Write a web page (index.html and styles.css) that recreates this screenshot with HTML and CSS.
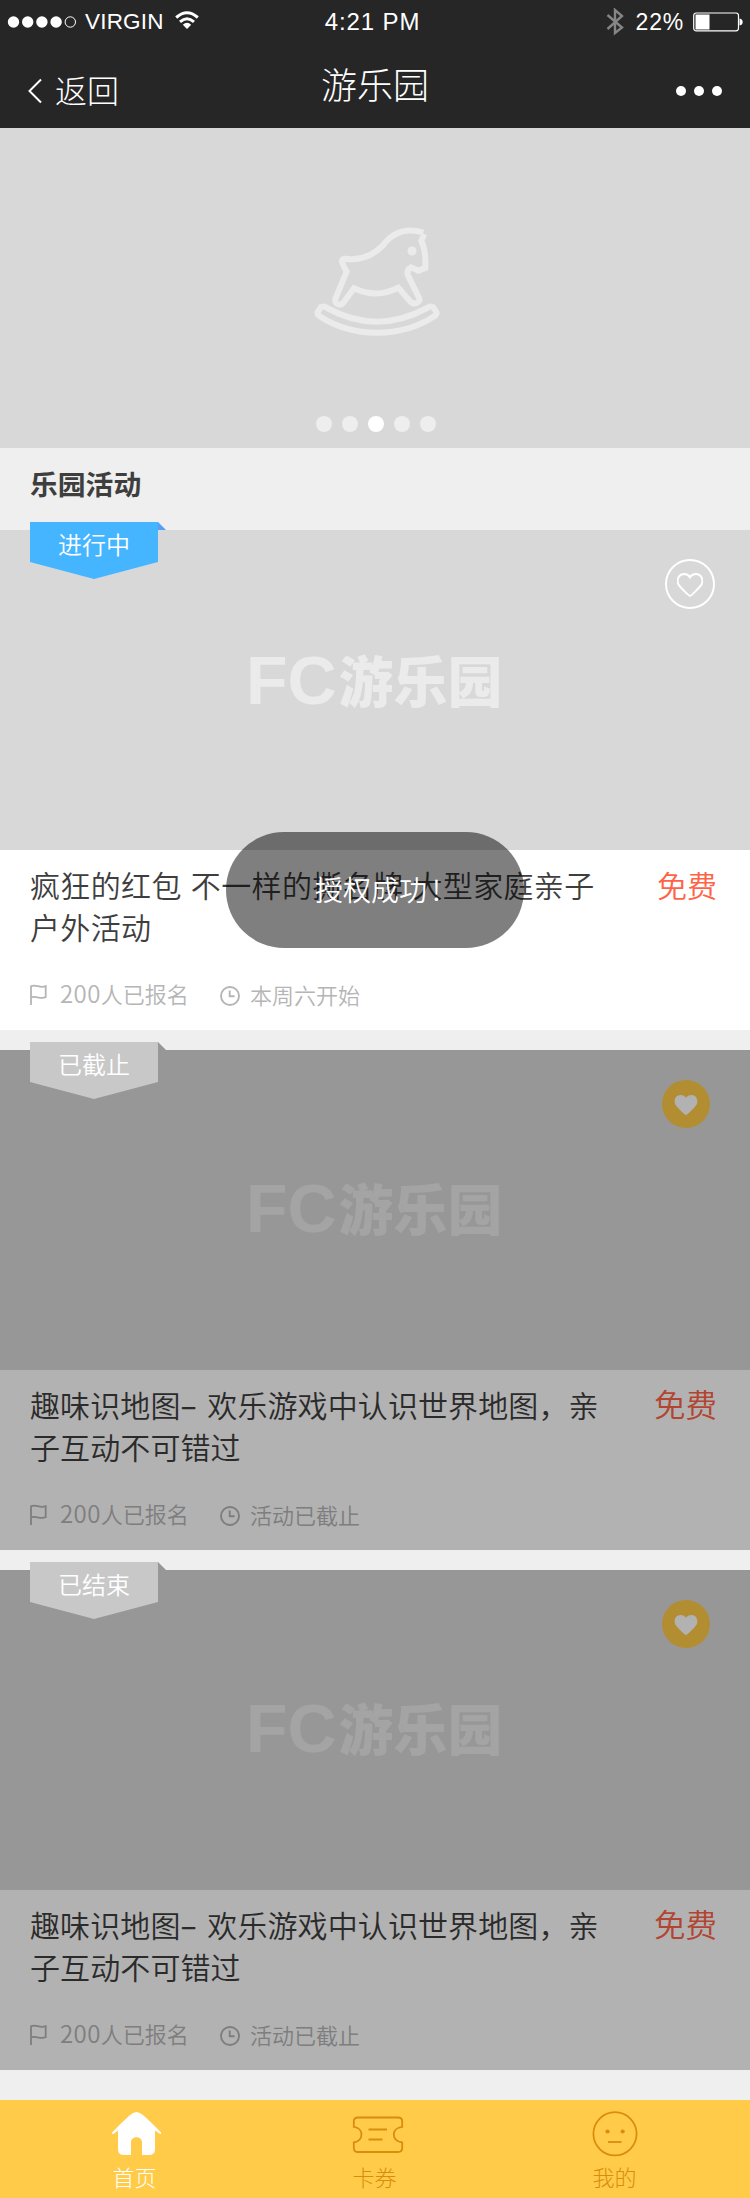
FILE: index.html
```html
<!DOCTYPE html>
<html lang="zh-CN">
<head>
<meta charset="utf-8">
<title>游乐园</title>
<link rel="stylesheet" href="styles.css">
</head>
<body>
<svg class="defs" width="0" height="0">
  <symbol id="flag" viewBox="0 0 18 22"><path d="M1 21V2.200C6-.2 9.500 4.600 15.700 2.200V13.200C9.500 15.800 6 11 1 13.400" fill="none" stroke="currentColor" stroke-width="1.800"/></symbol>
  <symbol id="clock" viewBox="0 0 20 20"><circle cx="10" cy="10" r="9" fill="none" stroke="currentColor" stroke-width="1.900"/><path d="M9.700 4.500V10.300H14.600" fill="none" stroke="currentColor" stroke-width="1.900"/></symbol>
  <symbol id="heart" viewBox="0 0 26 24"><path d="M13 23C11.900 23 2.900 13.900 1.500 11.600C-1 6.500 2 1 7 1C9.800 1 11.900 2.300 13 4.200C14.100 2.300 16.200 1 19 1C24 1 27 6.500 24.500 11.600C23.100 13.900 14.100 23 13 23Z"/></symbol>
</svg>
<div class="page">
  <header class="header">
    <div class="status">
      <div class="status-left">
        <svg width="70" height="14" viewBox="0 0 70 14" fill="#fff"><circle cx="6.500" cy="7" r="5.700"/><circle cx="20.700" cy="7" r="5.700"/><circle cx="34.900" cy="7" r="5.700"/><circle cx="49.100" cy="7" r="5.700"/><circle cx="63.300" cy="7" r="5.200" fill="none" stroke="#fff"/></svg>
        <span class="carrier">VIRGIN</span>
        <svg class="wifi" width="24" height="19" viewBox="0 0 24 19"><g fill="none" stroke="#fff" stroke-width="3"><path d="M1.200 6.500Q12-3 22.800 6.500"/><path d="M5 10.800Q12 4.600 19 10.800"/></g><path d="M7.800 13.700Q12 10 16.200 13.700L12 18Z" fill="#fff"/></svg>
      </div>
      <span class="time">4:21 PM</span>
      <div class="status-right">
        <svg width="18" height="28" viewBox="0 0 18 28"><path d="M1.500 7L16 19.500L9 25V2L16 8L1.500 21" fill="none" stroke="#858585" stroke-width="2.400"/></svg>
        <span class="percent">22%</span>
        <svg width="50" height="20" viewBox="0 0 50 20"><rect x=".7" y="1" width="44.800" height="17.800" rx="2.500" fill="none" stroke="#fff" stroke-width="1.200"/><path d="M2.500 2.500H16.500V17.500H2.500ZM46.500 6.500Q49.700 7 49.700 10T46.500 13.500Z" fill="#fff"/></svg>
      </div>
    </div>
    <nav class="nav">
      <div class="back"><svg width="14" height="26" viewBox="0 0 14 26"><path d="M13 1.500L1.500 13L13 24.500" fill="none" stroke="#fff" stroke-width="2"/></svg><span>返回</span></div>
      <h1 class="nav-title">游乐园</h1>
      <div class="more"><i></i><i></i><i></i></div>
    </nav>
  </header>

  <section class="banner">
    <svg class="horse" width="130" height="114" viewBox="98 80 390 342" fill="none" stroke="#ebebeb" stroke-width="18">
      <path d="M429 97Q354 74 308 135Q260 184 194 175Q180 176 187 190Q191 202 199 214L166 293Q161 309 175 312Q184 314 189 307L221 264Q289 296 354 262L390 304Q398 313 411 307Q420 302 416 292L384 228Q376 209 392 201L414 211L435 203Q437 149 423 122L431 101"/>
      <path d="M122 320Q132 316 140 323Q290 405 440 323Q450 315 459 321L468 335Q471 341 462 348C360 414 220 414 118 348Q109 341 112 335Z"/>
      <circle cx="395" cy="152" r="13.500" fill="#ebebeb" stroke="none"/>
    </svg>
    <div class="dots"><i></i><i></i><i class="on"></i><i></i><i></i></div>
  </section>

  <h2 class="section-title">乐园活动</h2>

  <main class="cards">
    <article class="card">
      <div class="cover"><div class="logo"><b>FC</b><span>游乐园</span></div></div>
      <div class="body">
        <div class="row"><h3 class="title">疯狂的红包 不一样的撕名牌 大型家庭亲子户外活动</h3><span class="price">免费</span></div>
        <div class="meta"><svg class="flag"><use href="#flag"/></svg><span class="count"><b>200</b>人已报名</span><svg class="clock"><use href="#clock"/></svg><span class="when">本周六开始</span></div>
      </div>
      <div class="like"><svg><use href="#heart"/></svg></div>
      <div class="ribbon blue"><span>进行中</span></div>
    </article>
    <article class="card ended">
      <div class="cover"><div class="logo"><b>FC</b><span>游乐园</span></div></div>
      <div class="body">
        <div class="row"><h3 class="title">趣味识地图<span class="dash">–</span> 欢乐游戏中认识世界地图，亲子互动不可错过</h3><span class="price">免费</span></div>
        <div class="meta"><svg class="flag"><use href="#flag"/></svg><span class="count"><b>200</b>人已报名</span><svg class="clock"><use href="#clock"/></svg><span class="when">活动已截止</span></div>
      </div>
      <div class="like"><svg><use href="#heart"/></svg></div>
      <div class="ribbon"><span>已截止</span></div>
    </article>
    <article class="card ended">
      <div class="cover"><div class="logo"><b>FC</b><span>游乐园</span></div></div>
      <div class="body">
        <div class="row"><h3 class="title">趣味识地图<span class="dash">–</span> 欢乐游戏中认识世界地图，亲子互动不可错过</h3><span class="price">免费</span></div>
        <div class="meta"><svg class="flag"><use href="#flag"/></svg><span class="count"><b>200</b>人已报名</span><svg class="clock"><use href="#clock"/></svg><span class="when">活动已截止</span></div>
      </div>
      <div class="like"><svg><use href="#heart"/></svg></div>
      <div class="ribbon"><span>已结束</span></div>
    </article>
  </main>

  <footer class="tabs">
    <div class="tab active">
      <svg width="52" height="48" viewBox="0 0 52 48"><path d="M18.500 4.500Q25.500-2.500 32.500 4.500Q40 11 50 21.500Q50.500 23 49 23L44 19.500V38Q44 44 38 44H31V31.500C31 24.500 20 24.500 20 31.500V44H13Q7 44 7 38V19.500L2.500 23Q.5 23 1.300 21.300Q10 12 18.500 4.500Z" fill="#fff"/></svg>
      <span>首页</span>
    </div>
    <div class="tab">
      <svg class="ticket" width="52" height="48" viewBox="0 0 52 48" fill="none" stroke="#d98d0c" stroke-width="1.800"><path d="M6 6.500H46Q50.200 6.500 50.200 10.500V15.800C39 17 39 30 50.200 31.500V37Q50.200 41 46 41H6Q1.800 41 1.800 37V31.500C12 30 12 17 1.800 15.800V10.500Q1.800 6.500 6 6.500Z"/><path d="M16.500 18.500H35M16.500 28.500H30.500"/></svg>
      <span>卡券</span>
    </div>
    <div class="tab">
      <svg class="face" width="52" height="48" viewBox="0 0 52 48" fill="none" stroke="#d98d0c" stroke-width="1.800"><circle cx="26" cy="22.800" r="21.600"/><path d="M19 31H32.500"/><circle cx="18.500" cy="20.500" r="2.100" fill="#d98d0c" stroke="none"/><circle cx="33.700" cy="20.500" r="2.100" fill="#d98d0c" stroke="none"/></svg>
      <span>我的</span>
    </div>
  </footer>

  <div class="toast">授权成功<span>!</span></div>
</div>
</body>
</html>
```
FILE: styles.css
```css
* { box-sizing: border-box; margin: 0; padding: 0; }
body { font-family: "Noto Sans CJK SC", sans-serif; font-weight: 350; }
h1, h2, h3 { font-weight: 350; }
svg { display: block; flex: none; }
.defs { position: absolute; }
.page { position: relative; width: 750px; height: 2198px; background: #efefef; overflow: hidden; }

.header { height: 128px; background: #262626; color: #fff; font-weight: 300; }
.status { display: grid; grid-template-columns: 1fr auto 1fr; align-items: center; height: 44px; padding: 0 7px; font-family: "Liberation Sans", Arial, sans-serif; font-weight: 400; }
.status-left, .status-right { display: flex; align-items: center; }
.status-left svg:first-child { margin-top: -1px; }
.carrier { margin-left: 8px; font-size: 22.5px; letter-spacing: .2px; line-height: 44px; }
.wifi { margin: -3px 0 0 11px; }
.time { padding-right: 5px; font-size: 24px; letter-spacing: .9px; }
.status-right { justify-content: flex-end; }
.percent { margin: 0 9px 0 12px; font-size: 23px; letter-spacing: .8px; }
.nav { display: grid; grid-template-columns: 1fr auto 1fr; height: 84px; padding: 0 28px; }
.back { display: flex; align-items: center; gap: 13px; height: 92px; font-size: 32px; }
.back span { line-height: 44px; margin-top: -3px; }
.back svg { margin-top: 2px; }
.nav-title { font-size: 36px; font-weight: 300; line-height: 78px; }
.more { display: flex; justify-content: flex-end; gap: 8px; padding-top: 42px; }
.more i { width: 10px; height: 10px; border-radius: 50%; background: #fff; }

.banner { display: flex; flex-direction: column; align-items: center; justify-content: space-between; height: 320px; padding: 99px 0 16px; background: #d8d8d8; }
.horse { margin-left: 5px; }
.dots { display: flex; gap: 10px; margin-left: 2px; }
.dots i { width: 16px; height: 16px; border-radius: 50%; background: #eee; }
.dots .on { background: #fff; }

.section-title { height: 82px; padding-left: 30px; font-size: 27.8px; font-weight: 700; line-height: 71px; color: #3e3e3e; }

.cards { display: flex; flex-direction: column; gap: 20px; }
.card { position: relative; height: 500px; background: #fff; }
.cover { height: 320px; padding: 111px 0 0 246px; background: #d8d8d8; }
.ended .cover { padding-top: 119px; }
.logo { display: flex; gap: 2px; height: 80px; color: #ebebeb; font-weight: 900; line-height: 80px; }
.logo b { font-family: "Liberation Sans", Arial, sans-serif; font-size: 68px; line-height: 79px; }
.logo span { font-size: 54.5px; line-height: 75px; }
.body { height: 180px; padding: 13px 33px 0 30px; }
.row { display: flex; justify-content: space-between; height: 108px; }
.title { width: 575px; font-size: 30px; line-height: 42px; letter-spacing: .36px; word-spacing: 2px; color: #3e3e3e; }
.ended .title { letter-spacing: .1px; }
.price { font-size: 30px; line-height: 42px; color: #ff6347; }
.ended .price { font-size: 31.500px; line-height: 40px; }
.dash { display: inline-block; width: 18px; font-weight: 500; }
.meta { display: flex; align-items: center; height: 44px; font-size: 22px; line-height: 44px; color: #b5b5b5; }
.meta b { font-size: 24px; font-weight: 350; letter-spacing: .4px; }
.flag { width: 18px; height: 22px; margin-top: 4px; }
.clock { width: 20px; height: 20px; margin-top: 5px; }
.count { width: 160px; margin-left: 12px; }
.when { margin: 1px 0 0 10px; }
.ended::after { content: ""; position: absolute; inset: 0; background: rgba(0, 0, 0, .3); }

.like { position: absolute; top: 29px; left: 665px; width: 50px; height: 50px; display: flex; align-items: center; justify-content: center; border: 2px solid #fff; border-radius: 50%; }
.like svg { width: 26px; height: 24px; margin-top: 2px; fill: none; stroke: #fff; stroke-width: 2px; overflow: visible; }
.ended .like { top: 30px; left: 662px; width: 48px; height: 48px; border: 0; background: #ffcb48; }
.ended .like svg { width: 24px; height: 22px; fill: #fff; stroke: none; }

.ribbon { position: absolute; z-index: 1; top: -8px; left: 30px; width: 128px; height: 57px; color: #fff; font-size: 24px; line-height: 44px; text-align: center; }
.ribbon::before { content: ""; position: absolute; inset: 0; background: #c8c8c8; clip-path: polygon(0 0, 100% 0, 100% 40px, 50% 100%, 0 40px); }
.ribbon::after { content: ""; position: absolute; top: 0; left: 100%; width: 8px; height: 8px; background: #979797; clip-path: polygon(0 0, 100% 100%, 0 100%); }
.ribbon span { position: relative; }
.blue::before { background: #45b5ff; }
.blue::after { background: #55a0f6; }

.tabs { display: flex; height: 98px; margin-top: 30px; padding: 11px 15px 0; background: #ffcb48; color: #d98d0c; font-weight: 300; }
.tab { flex: 1; display: flex; flex-direction: column; align-items: center; font-size: 22px; line-height: 34px; }
.tab span { margin-left: -1px; }
.active { color: #fff; }
.active svg { margin-left: 3px; }
.ticket { margin-left: 6px; }
.face { margin-left: -1px; }

.toast { position: absolute; top: 832px; left: 226px; width: 298px; height: 116px; border-radius: 58px; background: rgba(0, 0, 0, .5); color: #fff; font-size: 28px; line-height: 115px; padding-left: 89px; z-index: 2; }
.toast span { margin-left: 5px; }
```
